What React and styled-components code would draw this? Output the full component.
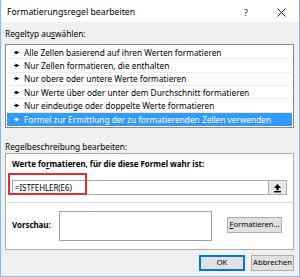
import React from "react";
import styled, { createGlobalStyle } from "styled-components";

const Global = createGlobalStyle`
  html, body { margin: 0; padding: 0; background: #ffffff; }
  * { box-sizing: border-box; }
  body { font-family: "Noto Sans", "Open Sans", sans-serif; font-size: 8.3px; color: #000; }
  u { text-decoration: underline; text-underline-offset: 1px; }
`;

const Window = styled.div`
  width: 300px;
  height: 277px;
  border: 1px solid #86b9e6;
  border-top: none;
  background: #f0f0f0;
  display: flex;
  flex-direction: column;
`;

const TitleBar = styled.div`
  height: 22px;
  background: #fff;
  display: flex;
  align-items: center;
  padding: 2px 0 0 6px;
  font-size: 8.7px;
`;

const Title = styled.div`
  flex: 1;
`;

const TitleIcon = styled.div`
  width: ${(p) => p.$w}px;
  display: flex;
  justify-content: center;
  align-items: center;
  color: #222;
  font-size: 9px;
`;

const Body = styled.div`
  flex: 1;
  display: flex;
  flex-direction: column;
  padding: 0 5px 0 4px;
`;

const Label = styled.div`
  height: 12px;
  line-height: 12px;
  margin-top: ${(p) => p.$mt}px;
`;

const ListBox = styled.div`
  margin-top: 4px;
  height: 84px;
  border: 1px solid #828790;
  background: #fff;
  padding: 1px;
  display: flex;
  flex-direction: column;
`;

const Row = styled.div`
  height: 13.5px;
  display: flex;
  align-items: center;
  padding-left: 7px;
  gap: 4px;
  white-space: nowrap;
  background: ${(p) => (p.$sel ? "#3399ff" : "transparent")};
  color: ${(p) => (p.$sel ? "#fff" : "#000")};
  border-bottom: 1px solid ${(p) => (p.$sel ? "#3399ff" : "#ececec")};
  &:last-child { border-bottom: none; }
`;

const DescBox = styled.div`
  height: 97px;
  border: 1px solid #adadad;
  background: #fff;
  display: flex;
  flex-direction: column;
`;

const Upper = styled.div`
  position: relative;
  height: 49px;
  border-bottom: 1px solid #d9d9d9;
  padding: 4px 6px 0 6px;
`;

const BoldLabel = styled.div`
  font-weight: 700;
  font-size: 7.9px;
  height: 12px;
  line-height: 12px;
`;

const InputRow = styled.div`
  margin-top: 10px;
  height: 15px;
  width: 275px;
  border: 1px solid #a9a9a9;
  display: flex;
  align-items: stretch;
  background: #fff;
`;

const InputText = styled.div`
  flex: 1;
  padding-left: 2px;
  line-height: 13px;
  font-size: 8px;
  letter-spacing: -0.1px;
`;

const PickButton = styled.div`
  width: 19px;
  margin: -1px -1px -1px 0;
  border: 1px solid #adadad;
  background: #e8e8e8;
  display: flex;
  align-items: center;
  justify-content: center;
`;

const Highlight = styled.div`
  position: absolute;
  left: 2px;
  top: 19px;
  width: 79px;
  height: 22px;
  border: 2px solid #e0312c;
`;

const Lower = styled.div`
  flex: 1;
  display: flex;
  align-items: center;
  padding: 0 0 2px 6px;
`;

const PreviewLabel = styled.div`
  font-weight: 700;
  font-size: 7.9px;
  width: 47px;
`;

const Preview = styled.div`
  width: 153px;
  height: 30px;
  border: 1px solid #a0a0a0;
  background: #fff;
  margin-top: 2px;
`;

const Button = styled.div`
  height: ${(p) => p.$h || 16}px;
  width: ${(p) => p.$w}px;
  margin-left: ${(p) => p.$ml || 0}px;
  border: 1px solid ${(p) => (p.$def ? "#0078d7" : "#adadad")};
  box-shadow: ${(p) => (p.$def ? "inset 0 0 0 1px #0078d7" : "none")};
  background: #e1e1e1;
  display: flex;
  align-items: center;
  justify-content: center;
  white-space: nowrap;
  font-size: 7.6px;
  line-height: 1;
`;

const Footer = styled.div`
  display: flex;
  justify-content: flex-end;
  padding: 5px 0 0 0;
  gap: 6px;
`;

const Arrow = () => (
  <svg width="6" height="5" viewBox="0 0 6 5">
    <path d="M0 2.5 L2 2.5" stroke="currentColor" strokeWidth="1" />
    <path d="M1.5 0.5 L5.5 2.5 L1.5 4.5 Z" fill="currentColor" />
  </svg>
);

const CloseIcon = () => (
  <svg width="9" height="9" viewBox="0 0 9 9">
    <path d="M0.5 0.5 L8.5 8.5 M8.5 0.5 L0.5 8.5" stroke="#222" strokeWidth="1" />
  </svg>
);

const UpIcon = () => (
  <svg width="9" height="10" viewBox="0 0 9 10">
    <path d="M4.5 1 L8 5 L5.6 5 L5.6 7.2 L3.4 7.2 L3.4 5 L1 5 Z" fill="#000" />
    <rect x="1" y="8" width="7" height="1.4" fill="#000" />
  </svg>
);

const items = [
  "Alle Zellen basierend auf ihren Werten formatieren",
  "Nur Zellen formatieren, die enthalten",
  "Nur obere oder untere Werte formatieren",
  "Nur Werte über oder unter dem Durchschnitt formatieren",
  "Nur eindeutige oder doppelte Werte formatieren",
  "Formel zur Ermittlung der zu formatierenden Zellen verwenden",
];

export default function App() {
  return (
    <>
      <Global />
      <Window>
        <TitleBar>
          <Title>Formatierungsregel bearbeiten</Title>
          <TitleIcon $w={34}>?</TitleIcon>
          <TitleIcon $w={36}>
            <CloseIcon />
          </TitleIcon>
        </TitleBar>
        <Body>
          <Label $mt={6}>
            Regeltyp au<u>s</u>wählen:
          </Label>
          <ListBox>
            {items.map((t, i) => (
              <Row key={i} $sel={i === items.length - 1}>
                <Arrow />
                <span>{t}</span>
              </Row>
            ))}
          </ListBox>
          <Label $mt={13}>
            Re<u>g</u>elbeschreibung bearbeiten:
          </Label>
          <DescBox>
            <Upper>
              <BoldLabel>
                Werte fo<u>r</u>matieren, für die diese Formel wahr ist:
              </BoldLabel>
              <InputRow>
                <InputText>=ISTFEHLER(E6)</InputText>
                <PickButton>
                  <UpIcon />
                </PickButton>
              </InputRow>
              <Highlight />
            </Upper>
            <Lower>
              <PreviewLabel>Vorschau:</PreviewLabel>
              <Preview />
              <Button $w={55} $ml={15}>
                <u>F</u>ormatieren...
              </Button>
            </Lower>
          </DescBox>
          <Footer>
            <Button $def $w={46}>OK</Button>
            <Button $w={43}>Abbrechen</Button>
          </Footer>
        </Body>
      </Window>
    </>
  );
}
